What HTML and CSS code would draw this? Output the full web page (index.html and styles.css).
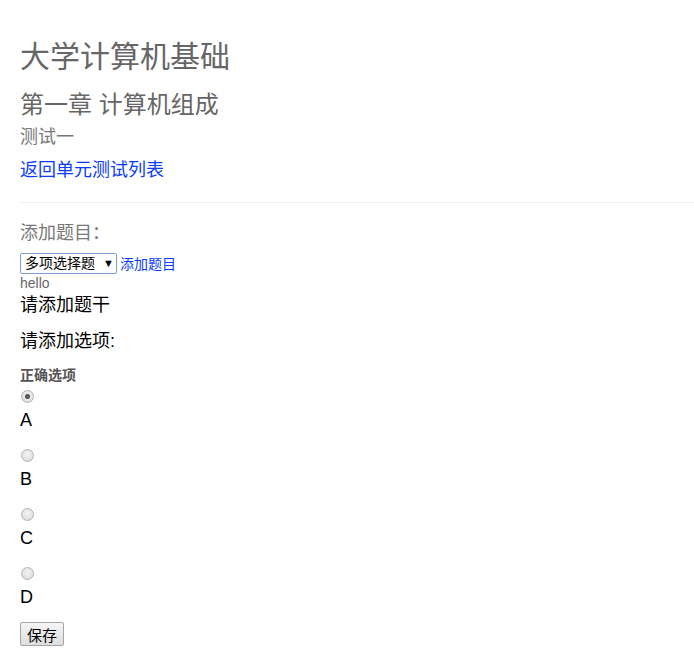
FILE: index.html
```html
<!DOCTYPE html>
<html lang="zh-CN">
<head>
<meta charset="utf-8">
<title>大学计算机基础</title>
<link rel="stylesheet" href="styles.css">
</head>
<body>
<div class="page">
  <h1 class="title">大学计算机基础</h1>
  <h2 class="chapter">第一章 计算机组成</h2>
  <h4 class="test">测试一</h4>
  <a class="back" href="#">返回单元测试列表</a>
  <hr class="rule">
  <div class="add-label">添加题目：</div>
  <div class="add-row">
    <span class="select">多项选择题<span class="arrow">▼</span></span>
    <a class="add-link" href="#">添加题目</a>
  </div>
  <div class="hello">hello</div>
  <div class="stem">请添加题干</div>
  <div class="opts-label">请添加选项:</div>
  <div class="correct">正确选项</div>
  <div class="opt"><span class="radio checked"></span><div class="letter">A</div></div>
  <div class="opt"><span class="radio"></span><div class="letter">B</div></div>
  <div class="opt"><span class="radio"></span><div class="letter">C</div></div>
  <div class="opt"><span class="radio"></span><div class="letter">D</div></div>
  <button class="save" type="button">保存</button>
</div>
</body>
</html>
```
FILE: styles.css
```css
html, body {
  margin: 0;
  padding: 0;
  background: #fff;
}
body {
  font-family: "Liberation Sans", "Noto Sans CJK SC", sans-serif;
  color: #000;
}
.page {
  padding: 40px 0 0 20px;
}
.title {
  margin: 0;
  font-size: 30px;
  line-height: 33px;
  font-weight: normal;
  color: #666;
}
.chapter {
  margin: 19px 0 0;
  font-size: 24px;
  line-height: 26px;
  font-weight: normal;
  color: #666;
}
.test {
  margin: 9px 0 0;
  font-size: 18px;
  line-height: 20px;
  font-weight: normal;
  color: #777;
}
.back {
  display: block;
  margin-top: 13px;
  font-size: 18px;
  line-height: 20px;
  color: #0a3cff;
  text-decoration: none;
}
.rule {
  margin: 22px 0 0;
  border: 0;
  border-top: 1px solid #eee;
  height: 0;
}
.add-label {
  margin-top: 20px;
  font-size: 18px;
  line-height: 20px;
  color: #777;
}
.add-row {
  margin-top: 10px;
  display: flex;
  align-items: center;
  gap: 3px;
  height: 21px;
}
.select {
  box-sizing: border-box;
  width: 97px;
  height: 21px;
  border: 1px solid #7c9fd6;
  border-radius: 2px;
  padding: 0 0 0 4px;
  display: flex;
  align-items: center;
  font-size: 14px;
  line-height: 19px;
  color: #000;
}
.arrow {
  font-size: 11px;
  margin-left: 8px;
}
.add-link {
  font-size: 14px;
  line-height: 20px;
  color: #0a3cff;
  text-decoration: none;
}
.hello {
  margin-top: 1px;
  font-size: 14px;
  line-height: 16px;
  color: #666;
}
.stem {
  margin-top: 4px;
  font-size: 18px;
  line-height: 20px;
}
.opts-label {
  margin-top: 16px;
  font-size: 18px;
  line-height: 20px;
}
.correct {
  margin-top: 16px;
  font-size: 14px;
  line-height: 16px;
  font-weight: bold;
  color: #555;
}
.opt {
  margin-top: 7px;
}
.opt + .opt {
  margin-top: 19px;
}
.radio {
  display: block;
  box-sizing: border-box;
  width: 13px;
  height: 13px;
  margin-left: 1px;
  border-radius: 50%;
  border: 1px solid #b4b4b4;
  background: radial-gradient(circle at 50% 40%, #f4f4f4, #d6d6d6);
  position: relative;
}
.radio.checked::after {
  content: "";
  position: absolute;
  left: 3px;
  top: 3px;
  width: 5px;
  height: 5px;
  border-radius: 50%;
  background: #555;
}
.letter {
  margin-top: 7px;
  font-size: 18px;
  line-height: 20px;
}
.save {
  margin-top: 15px;
  box-sizing: border-box;
  width: 44px;
  height: 24px;
  padding: 0;
  border: 1px solid #a5a5a5;
  border-radius: 2px;
  background: linear-gradient(#f5f5f5, #dedede);
  font-family: "Noto Sans CJK SC", sans-serif;
  font-size: 15px;
  color: #000;
  display: block;
}
```
